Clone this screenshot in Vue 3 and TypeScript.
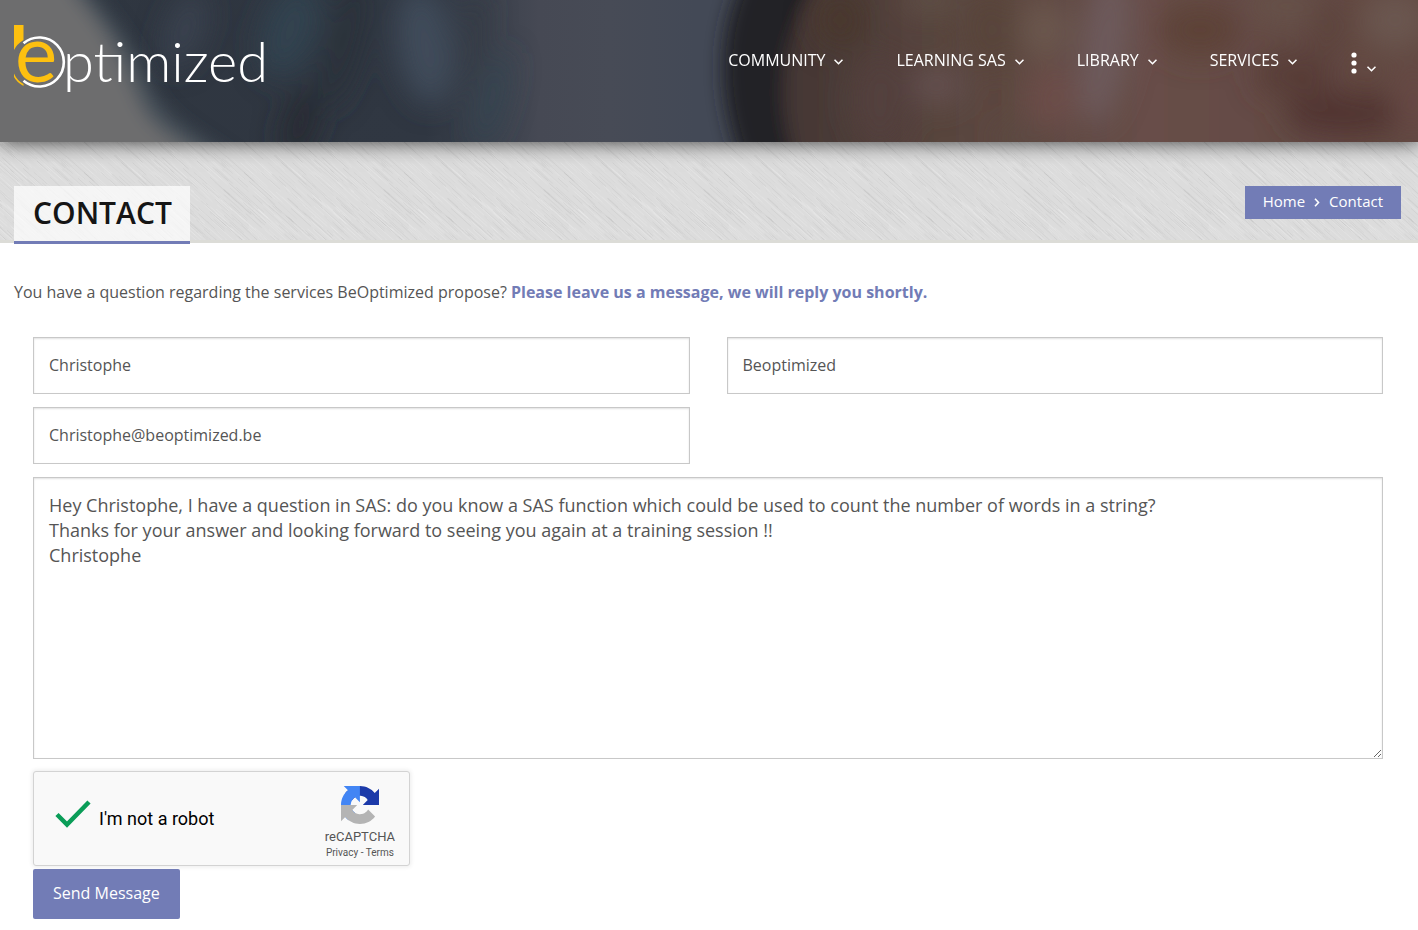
<script setup lang="ts">
import { ref } from 'vue'

interface Blob { x: number; y: number; rx: number; ry: number; c: string; a?: number }
interface Streak { x: number; y: number; l: number; c: string; o: number }

const menu: string[] = ['Community', 'Learning SAS', 'Library', 'Services']

const firstName = ref('Christophe')
const lastName = ref('Beoptimized')
const email = ref('Christophe@beoptimized.be')
const message = ref(
  'Hey Christophe, I have a question in SAS: do you know a SAS function which could be used to count the number of words in a string?\nThanks for your answer and looking forward to seeing you again at a training session !!\nChristophe'
)
const human = ref(true)

// Out-of-focus patches of the banner backdrop
const blobs: Blob[] = [
  { x: 185, y: 30, rx: 18, ry: 40, c: '#3a4350', a: 20 },
  { x: 290, y: 30, rx: 28, ry: 50, c: '#33434f', a: 20 },
  { x: 300, y: 125, rx: 16, ry: 40, c: '#272b33', a: 15 },
  { x: 345, y: 40, rx: 18, ry: 70, c: '#2a323a', a: 15 },
  { x: 425, y: 45, rx: 28, ry: 60, c: '#3f4c5a', a: -8 },
  { x: 470, y: 40, rx: 12, ry: 50, c: '#343a44', a: 12 },
  { x: 492, y: 100, rx: 12, ry: 50, c: '#364451', a: 15 },
  { x: 840, y: 20, rx: 26, ry: 30, c: '#4a392f' },
  { x: 880, y: 100, rx: 30, ry: 50, c: '#523f3d' },
  { x: 938, y: 85, rx: 26, ry: 20, c: '#63504f' },
  { x: 930, y: 0, rx: 30, ry: 14, c: '#5f5046' },
  { x: 990, y: 30, rx: 28, ry: 40, c: '#58443b' },
  { x: 1052, y: 98, rx: 26, ry: 34, c: '#6c4d4a' },
  { x: 1025, y: 138, rx: 30, ry: 14, c: '#5c4a42' },
  { x: 1045, y: 30, rx: 26, ry: 30, c: '#6a564e' },
  { x: 1105, y: 45, rx: 24, ry: 80, c: '#6d5a5b', a: 8 },
  { x: 1200, y: 30, rx: 40, ry: 28, c: '#5d4239' },
  { x: 1285, y: 6, rx: 40, ry: 18, c: '#66514a' },
  { x: 1295, y: 75, rx: 40, ry: 24, c: '#583e38' },
  { x: 1345, y: 114, rx: 60, ry: 22, c: '#513530' },
  { x: 1330, y: 28, rx: 20, ry: 30, c: '#5d443d' },
  { x: 1395, y: 20, rx: 34, ry: 30, c: '#6b5750' },
  { x: 1414, y: 100, rx: 20, ry: 38, c: '#664845' }
]

// Brushed texture tile: reproducible pseudo-random strokes
let seed = 17
const rnd = (): number => {
  seed = (seed * 16807) % 2147483647
  return seed / 2147483647
}
const streaks: Streak[] = []
for (let i = 0; i < 420; i++) {
  const s = { x: rnd() * 160, y: rnd() * 100, l: 6 + rnd() * 24, c: rnd() > 0.42 ? '#fff' : '#999', o: 0.05 + rnd() * 0.12 }
  for (const dx of [-160, 0]) for (const dy of [-100, 0]) streaks.push({ ...s, x: s.x + dx, y: s.y + dy })
}
</script>

<template>
  <div class="page">
    <header class="banner">
      <svg class="backdrop" viewBox="0 0 1418 142" preserveAspectRatio="none" aria-hidden="true">
        <defs>
          <linearGradient id="tone" x1="0" x2="1" y1="0" y2="0">
            <stop offset="0" stop-color="#2f3640" />
            <stop offset="0.3" stop-color="#303742" />
            <stop offset="0.34" stop-color="#3a404b" />
            <stop offset="0.38" stop-color="#464954" />
            <stop offset="0.43" stop-color="#474b56" />
            <stop offset="0.49" stop-color="#434956" />
          </linearGradient>
          <linearGradient id="skin" x1="0" x2="1" y1="0" y2="0">
            <stop offset="0" stop-color="#433634" />
            <stop offset="0.2" stop-color="#57443d" />
            <stop offset="0.5" stop-color="#674e48" />
            <stop offset="1" stop-color="#604640" />
          </linearGradient>
          <filter id="soft" x="-20%" y="-50%" width="140%" height="200%"><feGaussianBlur stdDeviation="14" /></filter>
          <filter id="edge" x="-20%" y="-50%" width="140%" height="200%"><feGaussianBlur stdDeviation="9" /></filter>
        </defs>
        <rect width="1418" height="142" fill="url(#tone)" />
        <g filter="url(#edge)">
          <path d="M770 -60 C705 10 710 120 765 210 H1500 V-60Z" fill="#232325" />
          <path d="M850 -60 C770 30 765 120 820 210 H1500 V-60Z" fill="url(#skin)" />
        </g>
        <g filter="url(#soft)">
          <ellipse
            v-for="(b, i) in blobs" :key="i"
            :cx="b.x" :cy="b.y" :rx="b.rx" :ry="b.ry" :fill="b.c"
            :transform="`rotate(${b.a ?? 0} ${b.x} ${b.y})`"
          />
        </g>
        <g filter="url(#edge)">
          <path d="M-60 -60 H60 L92 -5 C125 35 140 60 152 90 C165 120 190 130 232 160 V210 H-60Z" fill="#4a535b" />
          <path d="M-60 -60 H40 L75 -5 C115 40 125 70 138 100 C148 125 165 135 200 155 V210 H-60Z" fill="#6d6d6e" />
        </g>
      </svg>

      <a class="logo" href="#" aria-label="Beoptimized">
        <svg width="252" height="72" viewBox="0 0 252 72">
          <path d="M0 0H9.500V15Q3 19 0 25Z" fill="#fdc010" />
          <path d="M0 48.500Q3 55.500 9.500 59V61Q2.500 57 0 52Z" fill="#fdc010" />
          <path d="M9.500 18.300A24.500 24.500 0 1 1 9.500 55.700" fill="none" stroke="#fff" stroke-width="2.600" />
          <text class="mark" x="1" y="57">e</text>
          <text class="word" x="49" y="57">ptimized</text>
        </svg>
      </a>

      <nav class="menu" aria-label="Main">
        <a v-for="m in menu" :key="m" href="#">
          {{ m }}
          <svg class="caret" width="9" height="6" viewBox="0 0 9 6"><path d="M0.500 0.700L4.500 4.700L8.500 0.700" /></svg>
        </a>
        <button class="more" type="button" aria-label="More">
          <svg width="26" height="22" viewBox="0 0 26 22">
            <g fill="#fff"><circle cx="4" cy="3" r="2.600" /><circle cx="4" cy="11" r="2.600" /><circle cx="4" cy="19" r="2.600" /></g>
            <path class="tick" d="M17.500 14.700L21.500 18.700L25.500 14.700" />
          </svg>
        </button>
      </nav>
    </header>

    <section class="title-band">
      <svg class="texture" width="100%" height="100%" aria-hidden="true">
        <defs>
          <pattern id="brushed" width="160" height="100" patternUnits="userSpaceOnUse">
            <line
              v-for="(s, i) in streaks" :key="i"
              :x1="s.x" :y1="s.y" :x2="s.x + s.l" :y2="s.y + s.l * 0.9"
              :stroke="s.c" :stroke-opacity="s.o"
            />
          </pattern>
        </defs>
        <rect width="100%" height="100%" fill="url(#brushed)" />
      </svg>
      <h1>CONTACT</h1>
      <nav class="crumbs" aria-label="Breadcrumb">
        <a href="#">Home</a>
        <svg width="6" height="9" viewBox="0 0 6 9"><path d="M1 0.700L4.500 4.500L1 8.300" /></svg>
        <a href="#">Contact</a>
      </nav>
    </section>

    <main>
      <p class="intro">
        You have a question regarding the services BeOptimized propose?
        <strong>Please leave us a message, we will reply you shortly.</strong>
      </p>
      <form @submit.prevent>
        <div class="fields">
          <input v-model="firstName" type="text" aria-label="First name" />
          <input v-model="lastName" type="text" aria-label="Last name" />
          <input v-model="email" type="email" aria-label="Email" />
        </div>
        <textarea v-model="message" aria-label="Message" spellcheck="false"></textarea>
        <div class="captcha">
          <label class="check">
            <input v-model="human" type="checkbox" />
            <svg width="36" height="28" viewBox="0 0 36 28">
              <path v-if="human" d="M2 14.500L12 24.500L34 2" fill="none" stroke="#0a9d58" stroke-width="4.500" />
            </svg>
            <span>I'm not a robot</span>
          </label>
          <div class="brand">
            <svg width="38" height="38" viewBox="0 0 64 64">
              <path fill="#1c3aa9" d="M64 31.955l-.033-1.370V4.687l-7.160 7.160C50.948 4.674 42.033.093 32.050.093c-10.389 0-19.622 4.960-25.458 12.640l11.736 11.860a15.550 15.550 0 0 1 4.754-5.334c2.050-1.600 4.952-2.906 8.968-2.906.485 0 .860.057 1.135.163 4.976.393 9.288 3.140 11.828 7.124l-8.307 8.307L64 31.953" />
              <path fill="#4285f4" d="M31.862.094l-1.370.033H4.594l7.160 7.160C4.580 13.147 0 22.060 0 32.046c0 10.388 4.960 19.622 12.640 25.458L24.500 45.768a15.550 15.550 0 0 1-5.334-4.754c-1.600-2.050-2.906-4.952-2.906-8.968 0-.485.057-.860.163-1.135.393-4.976 3.140-9.288 7.124-11.828l8.307 8.307L31.860.095" />
              <path fill="#b4b4b4" d="M.001 32.045l.033 1.370v25.898l7.160-7.160c5.860 7.173 14.774 11.754 24.760 11.754 10.388 0 19.622-4.960 25.458-12.640l-11.736-11.860a15.550 15.550 0 0 1-4.754 5.334c-2.050 1.600-4.952 2.906-8.968 2.906-.485 0-.860-.057-1.135-.163-4.976-.393-9.288-3.140-11.828-7.124l8.307-8.307L.003 32.047" />
            </svg>
            <span class="brand-name">reCAPTCHA</span>
            <span class="legal"><a href="#">Privacy</a> - <a href="#">Terms</a></span>
          </div>
        </div>
        <button class="send" type="submit">Send Message</button>
      </form>
    </main>
  </div>
</template>

<style>
body {
  margin: 0;
  background: #fff;
}
</style>

<style scoped>
* {
  box-sizing: border-box;
}
.page {
  font-family: 'Open Sans', sans-serif;
  font-size: 16px;
  color: #555;
}
a {
  color: inherit;
  text-decoration: none;
}
.banner {
  position: relative;
  z-index: 2;
  display: flex;
  justify-content: space-between;
  align-items: flex-start;
  height: 142px;
  padding: 25px 42px 0 14px;
  background: #464a55;
  box-shadow: 0 0 20px rgba(0, 0, 0, 0.75);
}
.backdrop {
  position: absolute;
  inset: 0;
  width: 100%;
  height: 100%;
}
.logo,
.menu {
  position: relative;
}
.logo svg {
  display: block;
  overflow: visible;
}
.mark {
  font: 400 80px Lato, sans-serif;
  fill: #fdc010;
}
.word {
  font: 300 56px Lato, sans-serif;
  fill: #fff;
}
.menu {
  display: flex;
  gap: 53px;
  padding-top: 24px;
}
.menu a {
  display: flex;
  align-items: center;
  gap: 9px;
  line-height: 22px;
  height: 22px;
  color: #fff;
  text-transform: uppercase;
}
.caret {
  margin-top: 4px;
}
.caret path,
.tick,
.crumbs path {
  fill: none;
  stroke: #fff;
  stroke-width: 1.6;
}
.more {
  display: flex;
  padding: 3px 0 0;
  border: 0;
  background: none;
}
.title-band {
  position: relative;
  display: flex;
  justify-content: space-between;
  align-items: flex-start;
  padding: 44px 17px 0 14px;
  height: 101px;
  background: #dcdcdc;
  border-bottom: 3px solid #dcdcd7;
}
.texture {
  position: absolute;
  inset: 0;
}
h1 {
  position: relative;
  margin: 0;
  padding: 0 18px 2px 19px;
  border-bottom: 3px solid #727cb6;
  background: rgba(255, 255, 255, 0.7);
  font-size: 30px;
  line-height: 53px;
  font-weight: 600;
  color: #151515;
}
.crumbs {
  position: relative;
  display: flex;
  align-items: center;
  gap: 9px;
  padding: 0 18px;
  background: #727cb6;
  color: #fff;
  font-size: 15px;
  line-height: 33px;
}
.crumbs a {
  margin-top: -2px;
  line-height: 35px;
}
main {
  padding: 37px 35px 11px 14px;
}
.intro {
  margin: 0;
  line-height: 24px;
}
.intro strong {
  font-weight: 700;
  color: #727cb6;
}
form {
  padding: 33px 0 0 19px;
}
.fields {
  display: grid;
  grid-template-columns: 1fr 1fr;
  gap: 13px 37px;
}
input[type='text'],
input[type='email'],
textarea {
  width: 100%;
  border: 1px solid #c8c8c8;
  border-radius: 0;
  outline: 0;
  background: #fff;
  box-shadow: inset 0 1px 2px rgba(0, 0, 0, 0.12);
  color: #555;
  font-family: inherit;
}
input[type='text'],
input[type='email'] {
  height: 57px;
  padding: 0 15px 2px;
  font-size: 16px;
}
textarea {
  display: block;
  height: 282px;
  margin-top: 13px;
  padding: 15px;
  font-size: 18px;
  line-height: 25px;
  resize: vertical;
}
.captcha {
  display: flex;
  justify-content: space-between;
  width: 377px;
  height: 95px;
  margin: 12px 0 3px;
  padding: 0 14px 0 21px;
  border: 1px solid #d3d3d3;
  border-radius: 3px;
  background: #f9f9f9;
  box-shadow: 0 0 4px 1px rgba(0, 0, 0, 0.08);
  font-family: Roboto, sans-serif;
}
.check {
  display: flex;
  align-items: center;
  gap: 8px;
  color: #000;
  font-size: 18px;
}
.check input {
  position: absolute;
  opacity: 0;
}
.check svg {
  margin-bottom: 10px;
}
.brand {
  display: flex;
  flex-direction: column;
  align-items: center;
  padding-top: 14px;
}
.brand-name {
  margin-top: 5px;
  font-size: 13px;
  line-height: 16px;
}
.legal {
  margin-top: 2px;
  font-size: 10px;
  line-height: 12px;
}
.send {
  display: block;
  height: 50px;
  padding: 0 20px 2px;
  border: 0;
  border-radius: 2px;
  background: #727cb6;
  color: #fff;
  font-family: inherit;
  font-size: 16px;
}
</style>
